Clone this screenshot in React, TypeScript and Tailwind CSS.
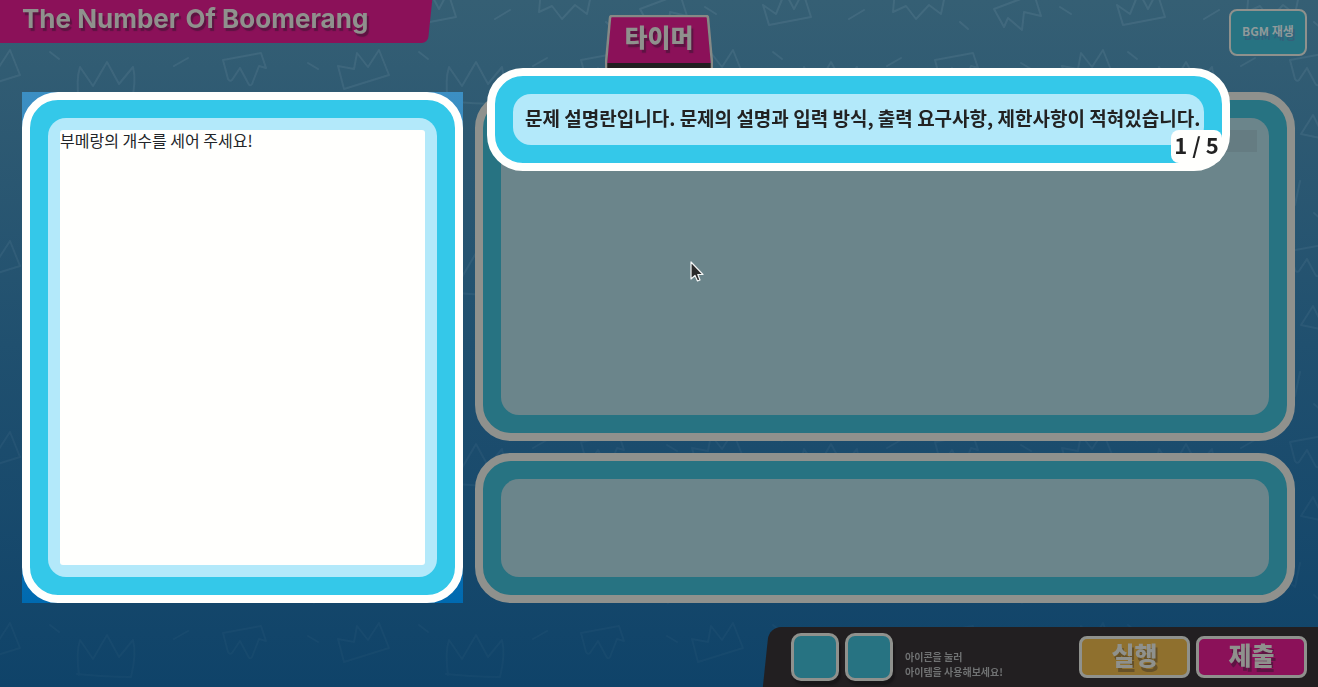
import React from "react";

const DISPLAY = "font-['Noto_Sans_CJK_KR',sans-serif]";

const CROWN = "M3 40 C1 26 1 14 4 5 L17 24 L31 0 L43 22 L57 5 C60 16 58 30 55 42 C38 42 20 41 1 39";
const TILTED = "M0 16 L16 19 L19 3 L30 17 L41 0 L51 25 L6 39 Z";
const TOOTH = "M0 9 L38 2 L43 17 L36 15 L29 33 Q27 36 25 32 L17 17 L9 29 Q7 31 5 28 Z";
const FLIPPED = "M2 -10 L0 12 L13 6 L23 19 L36 5 L48 14 L53 -10";
const SHARD = "M0 9 L40 -6 L47 16 L30 12 L28 30 L14 18 L10 27 Z";
const BLOCK = "M0 5 L13 14 L22 -8 L31 9 L40 -8 L48 17 L6 25 Z";

const ROWS = [-191, 0, 191, 382, 573];

const MARKS: { d: string; y: number; xs: number[] }[] = [
  { d: TILTED, y: 50, xs: [-31, 338, 692, 1062] },
  { d: CROWN, y: 62, xs: [76, 445, 800, 1155] },
  { d: TOOTH, y: 51, xs: [223, 581, 935, 1290] },
  { d: FLIPPED, y: 0, xs: [184, 539, 893, 1247] },
  { d: SHARD, y: 0, xs: [286, 640, 994] },
  { d: BLOCK, y: 0, xs: [55, 408, 763, 1117] },
  { d: "M0 19 L12 0 L24 24 Z", y: 115, xs: [1301] },
  { d: "M0 0 L9 7", y: 52, xs: [50, 419, 773, 1128] },
  { d: "M0 8 L14 0", y: 58, xs: [174, 533, 887, 1241] },
  { d: "M0 0 L10 6", y: 63, xs: [308, 667, 1021] },
  { d: "M0 9 L15 0", y: 10, xs: [140, 495, 849, 1204] },
  { d: "M0 0 L11 7", y: 7, xs: [350, 705, 1060] },
  { d: "M0 0 L8 7", y: 22, xs: [251, 606, 960, 1314] },
];

function Backdrop() {
  return (
    <svg aria-hidden="true" className="absolute inset-0 h-full w-full" fill="none">
      <defs>
        <linearGradient id="fade" x1="0" y1="0" x2="0" y2="1">
          <stop offset="0" stopColor="#fff" stopOpacity="1" />
          <stop offset="1" stopColor="#fff" stopOpacity="0.3" />
        </linearGradient>
        <mask id="fadeMask">
          <rect width="100%" height="100%" fill="url(#fade)" />
        </mask>
      </defs>
      <g mask="url(#fadeMask)">
        <g stroke="#a8c0cc" strokeOpacity="0.12" strokeWidth="2" strokeLinecap="round" strokeLinejoin="round">
          {ROWS.map((row) =>
            MARKS.map((mark, i) =>
              mark.xs.map((x) => (
                <path key={`${row}-${i}-${x}`} d={mark.d} transform={`translate(${x} ${mark.y + row})`} />
              ))
            )
          )}
        </g>
      </g>
    </svg>
  );
}

function DimPanel({ children }: { children?: React.ReactNode }) {
  return (
    <section className="flex rounded-[36px] border-8 border-[#8f918d] bg-[#277382] p-[18px]">
      <div className="flex min-w-0 flex-1 rounded-[18px] bg-[#6b858b] p-3">{children}</div>
    </section>
  );
}

function Header() {
  return (
    <header className="relative flex h-[92px] shrink-0 items-start justify-between">
      <div className="relative h-[43px] w-[430px] max-w-[40%]">
        <div className="absolute inset-y-0 right-0 -left-4 -skew-x-6 rounded-br-md bg-[#8b1159]" />
        <h1 className="relative pl-[22px] font-[Inter,sans-serif] text-[26px] leading-[38px] font-bold whitespace-nowrap text-[#8f918d] [text-shadow:2px_3px_1px_#5c1442]">
          The Number Of Boomerang
        </h1>
      </div>

      <div className="absolute top-[15px] left-1/2 flex h-[60px] w-[108px] -translate-x-1/2 justify-center">
        <svg aria-hidden="true" className="absolute inset-0" width="108" height="60" viewBox="0 0 108 60">
          <path d="M1 60 V48 L5 2 Q5 1 7 1 H101 Q103 1 103 2 L107 48 V60 Z" fill="#221f21" />
          <path d="M2 48 L6 1 H102 L106 48 Z" fill="#8b1159" />
          <path
            d="M1 60 V48 L5 3 Q5 1 7 1 H101 Q103 1 103 3 L107 48 V60"
            fill="none"
            stroke="#868986"
            strokeWidth="2.5"
          />
        </svg>
        <span className="relative text-[25px] leading-[42px] font-black text-[#8f918d] [text-shadow:2px_3px_1px_#5c1442]">
          타이머
        </span>
      </div>

      <button
        type="button"
        className="mt-[9px] mr-[11px] h-[47px] w-[78px] rounded-lg border-2 border-[#8f918d] bg-[#277382] pb-1 text-[12px] font-bold whitespace-nowrap text-[#8f9a9b] [text-shadow:2px_4px_0_#35607a]"
      >
        BGM 재생
      </button>
    </header>
  );
}

function Tooltip() {
  return (
    <div
      role="dialog"
      aria-label="1 / 5"
      className="absolute -top-6 right-[65px] left-3 rounded-[36px] border-8 border-[#fffffd] bg-[#34c8e9] p-[18px]"
    >
      <p className="rounded-[18px] bg-[#b3e9fa] pt-2.5 pr-2 pb-3.5 pl-3 text-[19px] leading-[27px] font-bold whitespace-nowrap text-[#222]">
        문제 설명란입니다. 문제의 설명과 입력 방식, 출력 요구사항, 제한사항이 적혀있습니다.
      </p>
      <span className="absolute right-0 bottom-0 flex h-[33px] w-[51px] justify-center rounded-lg bg-[#fffffd] text-[22px] leading-[28px] font-bold whitespace-nowrap text-[#222]">
        1 / 5
      </span>
    </div>
  );
}

function Footer() {
  const item =
    "h-12 w-12 rounded-[10px] border-[3px] border-[#8f918d] bg-[#277382] shadow-[2px_4px_2px_#191719]";
  const action =
    "h-[42px] w-[111px] rounded-lg border-[3px] border-[#8f918d] pb-1.5 text-[25px] leading-none font-black text-[#8f918d]";
  return (
    <footer className="mt-6 flex h-[60px] shrink-0 justify-end overflow-hidden">
      <div className="relative flex w-[552px] items-start pr-[11px] pl-[25px]">
        <div className="absolute inset-y-0 -right-4 left-0 -skew-x-6 rounded-tl-xl bg-[#221f21]" />
        <div className="relative mt-1.5 flex gap-1.5">
          <button type="button" aria-label="아이템 1" className={item} />
          <button type="button" aria-label="아이템 2" className={item} />
        </div>
        <p className="relative mt-[22px] ml-3 flex-1 text-[10px] leading-[15px] font-bold text-[#707273]">
          아이콘을 눌러
          <br />
          아이템을 사용해보세요!
        </p>
        <div className="relative mt-[9px] flex gap-1.5">
          <button type="button" className={`${action} bg-[#8f702e] [text-shadow:2px_4px_0_#665128]`}>
            실행
          </button>
          <button type="button" className={`${action} bg-[#8b1159] [text-shadow:2px_4px_0_#5c1442]`}>
            제출
          </button>
        </div>
      </div>
    </footer>
  );
}

export default function App() {
  return (
    <div
      className={`relative flex min-h-screen flex-col overflow-hidden bg-linear-to-b from-[#355f74] via-[#20506f] to-[#0f4369] ${DISPLAY}`}
    >
      <Backdrop />
      <div className="relative flex flex-1 flex-col">
        <Header />
        <main className="grid flex-1 grid-cols-[441fr_820fr] gap-3 pr-[23px] pl-[22px]">
          <div className="flex bg-linear-to-b from-[#3c8fc3] to-[#006ab0]">
            <section className="flex min-w-0 flex-1 rounded-[36px] border-8 border-[#fffffd] bg-[#34c8e9] p-[18px]">
              <div className="flex min-w-0 flex-1 rounded-[18px] bg-[#b3e9fa] p-3">
                <div className="min-w-0 flex-1 rounded-[3px] bg-[#fffffd] text-[16px] leading-5 text-[#222529]">
                  부메랑의 개수를 세어 주세요!
                </div>
              </div>
            </section>
          </div>
          <div className="relative grid grid-rows-[349fr_150fr] gap-3">
            <DimPanel>
              <div className="h-[22px] flex-1 bg-[#657c82]" />
            </DimPanel>
            <DimPanel />
            <Tooltip />
          </div>
        </main>
        <Footer />
      </div>
      <svg
        aria-hidden="true"
        className="pointer-events-none absolute top-[261px] left-[690px]"
        width="14"
        height="21"
        viewBox="0 0 14 21"
      >
        <path
          d="M1 1 V18 L5 14.5 L7.5 20 L10 19 L7.8 13.5 H13 Z"
          fill="#2b2b2b"
          stroke="#f4f6f6"
          strokeWidth="1.2"
          strokeLinejoin="round"
        />
      </svg>
    </div>
  );
}
